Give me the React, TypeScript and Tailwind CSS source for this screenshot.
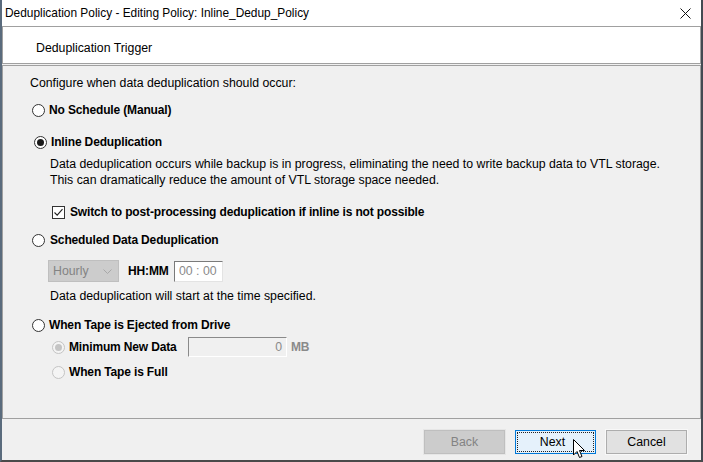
import React from 'react';

const font = { fontFamily: '"Liberation Sans", Arial, sans-serif' };

const Radio = ({ checked = false, disabled = false }: { checked?: boolean; disabled?: boolean }) => (
  <span
    className={`relative inline-flex shrink-0 w-[13px] h-[13px] rounded-full border items-center justify-center ${
      disabled ? 'border-[#c4c4c4] bg-[#f4f4f4]' : 'border-[#333333] bg-white'
    }`}
  >
    {checked && (
      <span className={`w-[7px] h-[7px] rounded-full ${disabled ? 'bg-[#c4c4c4]' : 'bg-[#1a1a1a]'}`} />
    )}
  </span>
);

const Checkbox = () => (
  <span className="inline-flex shrink-0 w-[13px] h-[13px] border border-[#333333] bg-white items-center justify-center">
    <svg width="11" height="11" viewBox="0 0 11 11">
      <path d="M1.5 5.5 L4.2 8.2 L9.5 2.2" fill="none" stroke="#222" strokeWidth="1.1" />
    </svg>
  </span>
);

export default function App() {
  return (
    <div
      className="w-[703px] h-[462px] bg-[#f0f0f0] border-l-2 border-l-[#5a6b7d] border-r-2 border-r-[#444a52] border-b-2 border-b-[#4a4a4a] flex flex-col text-[12.3px] text-black overflow-hidden"
      style={font}
    >
      {/* Title bar */}
      <div className="h-[26px] bg-white flex items-center justify-between pl-[3px] pr-[10px] shrink-0 text-[11.9px]">
        <span className="leading-[14px]">Deduplication Policy - Editing Policy: Inline_Dedup_Policy</span>
        <svg width="11" height="11" viewBox="0 0 11 11">
          <path d="M0.5 0.5 L10.5 10.5 M10.5 0.5 L0.5 10.5" stroke="#111" strokeWidth="1" />
        </svg>
      </div>

      {/* Header panel */}
      <div className="h-[38px] shrink-0 bg-white border border-[#a0a0a0] pl-[33px] pt-[14px] leading-[14px]">
        Deduplication Trigger
      </div>

      {/* Content panel */}
      <div className="mt-[1px] h-[354px] shrink-0 border border-[#a0a0a0] flex flex-col">
        <div className="mt-[10px] h-[14px] leading-[14px] pl-[27px]">Configure when data deduplication should occur:</div>

        <div className="mt-[12px] h-[16px] flex items-center pl-[29px] gap-[4px] font-bold text-[12px] tracking-[-0.15px]">
          <Radio />
          <span>No Schedule (Manual)</span>
        </div>

        <div className="mt-[16px] h-[16px] flex items-center pl-[31px] gap-[4px] font-bold text-[12px] tracking-[-0.15px]">
          <Radio checked />
          <span>Inline Deduplication</span>
        </div>

        <div className="mt-[6px] pl-[47px] leading-[16px]">
          <div>Data deduplication occurs while backup is in progress, eliminating the need to write backup data to VTL storage.</div>
          <div>This can dramatically reduce the amount of VTL storage space needed.</div>
        </div>

        <div className="mt-[16px] h-[16px] flex items-center pl-[49px] gap-[5px] font-bold text-[12px] tracking-[-0.15px]">
          <Checkbox />
          <span>Switch to post-processing deduplication if inline is not possible</span>
        </div>

        <div className="mt-[12px] h-[16px] flex items-center pl-[29px] gap-[5px] font-bold text-[12px] tracking-[-0.15px]">
          <Radio />
          <span>Scheduled Data Deduplication</span>
        </div>

        <div className="mt-[12px] h-[22px] flex items-center pl-[45px]">
          <div className="w-[71px] h-[22px] bg-[#cccccc] border border-[#bfbfbf] flex items-center justify-between pl-[4px] pr-[6px] text-[#838383]">
            <span>Hourly</span>
            <svg width="9" height="5" viewBox="0 0 9 5">
              <path d="M0.5 0.5 L4.5 4.5 L8.5 0.5" fill="none" stroke="#a8a8a8" strokeWidth="1" />
            </svg>
          </div>
          <span className="ml-[9px] w-[46px] font-bold text-[12px] tracking-[-0.15px]">HH:MM</span>
          <div className="w-[49px] h-[21px] bg-white border border-t-[#7a7a7a] border-l-[#7a7a7a] border-r-[#e3e3e3] border-b-[#e3e3e3] flex items-center pl-[4px] text-[#8a8a8a]">
            00 : 00
          </div>
        </div>

        <div className="mt-[6px] h-[16px] leading-[16px] pl-[47px]">Data deduplication will start at the time specified.</div>

        <div className="mt-[13px] h-[16px] flex items-center pl-[29px] gap-[4px] font-bold text-[12px] tracking-[-0.15px]">
          <Radio />
          <span>When Tape is Ejected from Drive</span>
        </div>

        <div className="mt-[4px] h-[20px] flex items-center pl-[49px] font-bold text-[12px] tracking-[-0.15px]">
          <Radio checked disabled />
          <span className="ml-[4px] w-[119px]">Minimum New Data</span>
          <div className="w-[99px] h-[20px] bg-[#f0f0f0] border border-t-[#8a8a8a] border-l-[#8a8a8a] border-r-[#ffffff] border-b-[#ffffff] flex items-center justify-end pr-[4px] font-normal tracking-normal text-[12.3px] text-[#8a8a8a]">
            0
          </div>
          <span className="ml-[4px] text-[#8a8a8a]">MB</span>
        </div>

        <div className="mt-[7px] h-[16px] flex items-center pl-[49px] gap-[4px] font-bold text-[12px] tracking-[-0.15px]">
          <Radio disabled />
          <span>When Tape is Full</span>
        </div>
      </div>

      {/* Button bar */}
      <div className="flex-1 flex justify-end items-start pt-[11px] pr-[14px] gap-[10px]">
        <div className="w-[81px] h-[24px] bg-[#cccccc] border border-[#bfbfbf] outline outline-1 outline-[#e6e6e6] flex items-center justify-center text-[#838383]">
          Back
        </div>
        <div className="relative w-[81px] h-[24px] bg-[#e5f1fb] border border-[#0078d7] flex items-center justify-center">
          <div className="absolute inset-[1px] border border-dotted border-[#222]" />
          <span className="relative pr-[6px]">Next</span>
          <svg className="absolute left-[57px] top-[8px]" width="13" height="20" viewBox="0 0 13 20">
            <path
              d="M0.5 0.5 L0.5 16 L4 12.5 L6.5 18.5 L9 17.5 L6.5 11.5 L11.5 11.5 Z"
              fill="#fff"
              stroke="#000"
              strokeWidth="1"
              strokeLinejoin="miter"
            />
          </svg>
        </div>
        <div className="w-[81px] h-[24px] bg-[#e1e1e1] border border-[#adadad] outline outline-1 outline-[#f8f8f8] flex items-center justify-center">
          Cancel
        </div>
      </div>
    </div>
  );
}
